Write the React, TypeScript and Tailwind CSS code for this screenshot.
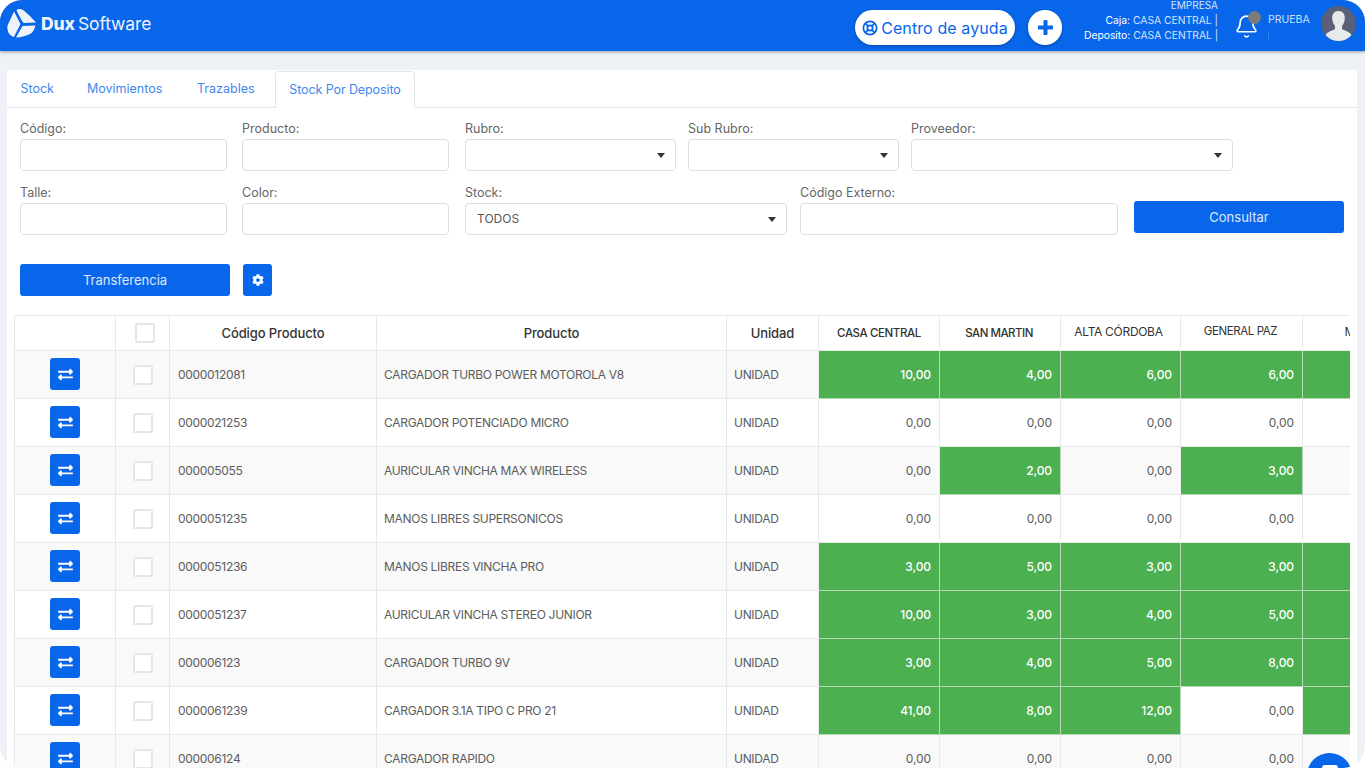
import { LifeBuoy, Bell } from "lucide-react";
import { FaCog, FaExchangeAlt } from "react-icons/fa";

const font = "font-['Inter','Liberation_Sans',sans-serif]";

type Row = { code: string; name: string; v: [string, string, string, string]; last: boolean };

const rows: Row[] = [
  { code: "0000012081", name: "CARGADOR TURBO POWER MOTOROLA V8", v: ["10,00", "4,00", "6,00", "6,00"], last: true },
  { code: "0000021253", name: "CARGADOR POTENCIADO MICRO", v: ["0,00", "0,00", "0,00", "0,00"], last: false },
  { code: "000005055", name: "AURICULAR VINCHA MAX WIRELESS", v: ["0,00", "2,00", "0,00", "3,00"], last: false },
  { code: "0000051235", name: "MANOS LIBRES SUPERSONICOS", v: ["0,00", "0,00", "0,00", "0,00"], last: false },
  { code: "0000051236", name: "MANOS LIBRES VINCHA PRO", v: ["3,00", "5,00", "3,00", "3,00"], last: true },
  { code: "0000051237", name: "AURICULAR VINCHA STEREO JUNIOR", v: ["10,00", "3,00", "4,00", "5,00"], last: true },
  { code: "000006123", name: "CARGADOR TURBO 9V", v: ["3,00", "4,00", "5,00", "8,00"], last: true },
  { code: "0000061239", name: "CARGADOR 3.1A TIPO C PRO 21", v: ["41,00", "8,00", "12,00", "0,00"], last: true },
  { code: "000006124", name: "CARGADOR RAPIDO", v: ["0,00", "0,00", "0,00", "0,00"], last: false },
];

function Logo() {
  return (
    <svg width="30" height="29" viewBox="0 0 30 29" className="shrink-0 mb-[5px]">
      <path d="M9.5 1C11-.3 14-.3 16 1c3 2 9 8 13 12.500L16.500 14C14 10 11 5.500 9.500 1Z" fill="#eef3fb" />
      <path d="M7 2.500 13.500 15C11 20 8.500 24.500 7 28c-3-1-6-3-6.500-8C0 18 .5 16.500 1.200 15Z" fill="#eef3fb" />
      <path d="M9 28.500 15.500 17l13-.5c-1 3.500-2.500 6.500-4.500 8-4 2-10 4-15 4Z" fill="#eef3fb" />
    </svg>
  );
}

function Field({ label, w, select, value }: { label: string; w: string; select?: boolean; value?: string }) {
  return (
    <div className={`flex flex-col shrink-0 ${w}`}>
      <label className="h-[18px] text-[12.5px] leading-[16px] text-[#666]">{label}</label>
      <div className="h-[32px] rounded-[4px] border border-[#dedede] bg-white flex items-center justify-between pl-[11px] pr-[10px] text-[12px] text-[#555]">
        <span>{value}</span>
        {select && <span className="w-0 h-0 border-x-[4px] border-x-transparent border-t-[5px] border-t-[#333]" />}
      </div>
    </div>
  );
}

function Check({ header }: { header?: boolean }) {
  return (
    <span
      className={`block w-[20px] h-[20px] rounded-[2px] border-2 border-[#e6e6e6] bg-white ${header ? "ml-[19px]" : "ml-[17px]"}`}
    />
  );
}

export default function App() {
  return (
    <div className={`h-[768px] w-full bg-white overflow-hidden ${font}`}>
      <div className="relative h-full rounded-[22px] bg-[#eef1f5] overflow-hidden flex flex-col">
        <header className="h-[51px] shrink-0 bg-[#0866eb] shadow-[0_1px_3px_rgba(0,0,0,0.35)] flex items-center pl-[7px] relative z-10">
          <Logo />
          <div className="ml-[4px] text-[17.5px] tracking-[-0.1px] text-[#eef3fb] mb-[3px]">
            <span className="font-extrabold">Dux</span>
            <span className="font-normal ml-[3px]">Software</span>
          </div>
          <div className="ml-auto flex items-center h-full">
            <button className="w-[160px] h-[35px] mt-[4px] rounded-full bg-white flex items-center justify-center gap-[3px] text-[#0866eb] text-[16px] tracking-[0.1px] shadow-[0_1px_3px_rgba(0,0,0,0.3)]">
              <LifeBuoy size={16} strokeWidth={2.6} />
              <span>Centro de ayuda</span>
            </button>
            <button className="ml-[13px] w-[34px] h-[35px] mt-[4px] rounded-full bg-white flex items-center justify-center shadow-[0_1px_3px_rgba(0,0,0,0.3)]">
              <svg width="15" height="15" viewBox="0 0 15 15">
                <path d="M5.500 1a1 1 0 0 1 1-1h2a1 1 0 0 1 1 1v4.500H14a1 1 0 0 1 1 1v2a1 1 0 0 1-1 1H9.500V14a1 1 0 0 1-1 1h-2a1 1 0 0 1-1-1V9.500H1a1 1 0 0 1-1-1v-2a1 1 0 0 1 1-1h4.500Z" fill="#0866eb" />
              </svg>
            </button>
            <div className="ml-[22px] w-[134px] h-full text-right text-[10.3px] leading-[15px] whitespace-nowrap text-[#d5e4fb] flex flex-col -mt-[6px]">
              <span className="mt-[1px] text-[10px]">EMPRESA</span>
              <span>
                <span className="text-white">Caja:</span> CASA CENTRAL |
              </span>
              <span>
                <span className="text-white">Deposito:</span> CASA CENTRAL |
              </span>
            </div>
            <div className="relative ml-[16px] w-[24px] h-[26px] mt-[3px] text-white">
              <Bell size={25} strokeWidth={1.6} />
              <span className="absolute -top-[3px] left-[14px] w-[13px] h-[13px] rounded-full bg-[#7b7b7b]" />
            </div>
            <div className="ml-[10px] w-[53px] flex flex-col self-start pt-[12px]">
              <span className="text-[10.5px] leading-[15px] text-[#cfe0fa]">PRUEBA</span>
              <span className="mt-[5px] w-px h-[7px] bg-[#3b84ef]" />
            </div>
            <div className="mr-[9px] mt-[-4px] w-[35px] h-[35px] rounded-full overflow-hidden bg-[#5b6079] shrink-0">
              <svg viewBox="0 0 35 35" width="35" height="35">
                <path d="M17.500 5c4.500 0 6.600 3.200 6.300 7.600-.2 3-1.200 5.700-2.700 7.200v3.400c2.800 1.600 7.200 2.300 9 5.300L33 35H2l2.900-6.500c1.800-3 6.200-3.700 9-5.300v-3.400c-1.500-1.500-2.500-4.200-2.700-7.200C10.900 8.200 13 5 17.500 5Z" fill="#e6eaea" />
              </svg>
            </div>
          </div>
        </header>

        <main className="flex-1 min-h-0 pt-[19px] pl-[7px] pr-[8px]">
          <div className="bg-white h-full">
            <nav className="h-[38px] border-b border-[#e3e5e8] flex items-end text-[12.5px] text-[#3f88ee]">
              <a className="pl-[13.500px] w-[80px] h-[36px] leading-[36px]">Stock</a>
              <a className="w-[110px] h-[36px] leading-[36px]">Movimientos</a>
              <a className="w-[78px] h-[36px] leading-[36px]">Trazables</a>
              <a className="w-[140px] h-[37px] -mb-px bg-white border border-b-0 border-[#e3e5e8] rounded-t-[4px] leading-[35px] text-center tracking-[-0.1px]">
                Stock Por Deposito
              </a>
            </nav>

            <section className="px-[13px] pt-[13px]">
              <div className="flex gap-x-[12px]">
                <Field label="Código:" w="w-[207px] mr-[3px]" />
                <Field label="Producto:" w="w-[207px] mr-[4px]" />
                <Field label="Rubro:" w="w-[211px]" select />
                <Field label="Sub Rubro:" w="w-[211px]" select />
                <Field label="Proveedor:" w="w-[322px]" select />
              </div>
              <div className="flex items-end gap-x-[12px] mt-[14px]">
                <Field label="Talle:" w="w-[207px] mr-[3px]" />
                <Field label="Color:" w="w-[207px] mr-[4px]" />
                <Field label="Stock:" w="w-[322px] mr-[1px]" select value="TODOS" />
                <Field label="Código Externo:" w="w-[318px] mr-[4px]" />
                <button className="w-[210px] h-[32px] mb-[2px] pt-[1px] rounded-[3px] bg-[#0866eb] text-white/85 text-[13px]">
                  Consultar
                </button>
              </div>
              <div className="flex gap-[13px] mt-[29px]">
                <button className="w-[210px] h-[32px] pt-[1px] rounded-[3px] bg-[#0866eb] text-white/85 text-[13px]">
                  Transferencia
                </button>
                <button className="w-[29px] h-[32px] rounded-[3px] bg-[#0866eb] text-white flex items-center justify-center">
                  <FaCog size={12} />
                </button>
              </div>
            </section>

            <section className="mx-[7px] mt-[19px] overflow-hidden">
              <table className="table-fixed border-collapse w-[1408px] text-[12px] tracking-[-0.3px] text-[#5c5c5c]">
                <colgroup>
                  <col className="w-[101px]" />
                  <col className="w-[54px]" />
                  <col className="w-[207px]" />
                  <col className="w-[350px]" />
                  <col className="w-[92px]" />
                  <col className="w-[121px]" />
                  <col className="w-[121px]" />
                  <col className="w-[120px]" />
                  <col className="w-[122px]" />
                  <col className="w-[120px]" />
                </colgroup>
                <thead>
                  <tr className="h-[35px] text-[#333] text-[13px] tracking-[-0.1px]">
                    <th className="border border-[#e8e8e8] font-medium" />
                    <th className="border border-[#e8e8e8] font-medium p-0">
                      <Check header />
                    </th>
                    <th className="border border-[#e8e8e8] font-medium pt-[1px]">Código Producto</th>
                    <th className="border border-[#e8e8e8] font-medium pt-[1px]">Producto</th>
                    <th className="border border-[#e8e8e8] font-medium pt-[1px]">Unidad</th>
                    <th className="border border-[#e8e8e8] font-medium pt-[1px] text-[11.5px] tracking-[-0.4px]">CASA CENTRAL</th>
                    <th className="border border-[#e8e8e8] font-medium pt-[1px] pr-[2px] text-[11.5px] tracking-[-0.5px]">SAN MARTIN</th>
                    <th className="border border-[#e8e8e8] font-normal text-[12px] tracking-[-0.3px] pb-[3px] pr-[4px]">ALTA CÓRDOBA</th>
                    <th className="border border-[#e8e8e8] font-normal text-[11.5px] tracking-[-0.4px] pb-[3px] pr-[2px]">GENERAL PAZ</th>
                    <th className="border border-[#e8e8e8] font-normal text-[12px] pb-[3px]">MITRE</th>
                  </tr>
                </thead>
                <tbody>
                  {rows.map((r, i) => (
                    <tr key={r.code} className={`h-[48px] ${i % 2 === 0 ? "bg-[#f9f9f9]" : "bg-white"}`}>
                      <td className="border border-[#e8e8e8] p-0">
                        <button className="mx-auto -mt-[1px] w-[30px] h-[32px] rounded-[3px] bg-[#0866eb] text-white flex items-center justify-center">
                          <FaExchangeAlt size={15} />
                        </button>
                      </td>
                      <td className="border border-[#e8e8e8] p-0">
                        <Check />
                      </td>
                      <td className="border border-[#e8e8e8] pl-[8px] pr-[7px] pt-[1px]">{r.code}</td>
                      <td className="border border-[#e8e8e8] px-[7px] pt-[1px] whitespace-nowrap">{r.name}</td>
                      <td className="border border-[#e8e8e8] px-[7px] pt-[1px]">UNIDAD</td>
                      {r.v.map((v, j) => (
                        <td
                          key={j}
                          className={
                            v !== "0,00"
                              ? "border border-[#b5dab7] bg-[#4caf50] text-white font-medium text-right pr-[8px] pt-[1px] tracking-[-0.1px]"
                              : "border border-[#e8e8e8] text-right pr-[8px] pt-[1px] tracking-[-0.1px]"
                          }
                        >
                          {v}
                        </td>
                      ))}
                      <td className={r.last ? "border border-[#b5dab7] bg-[#4caf50]" : "border border-[#e8e8e8]"} />
                    </tr>
                  ))}
                </tbody>
              </table>
            </section>
          </div>
        </main>

        <div className="absolute left-[1307px] top-[753px] w-[45px] h-[45px] rounded-full bg-[#0866eb] flex justify-center pt-[12px]">
          <span className="w-[16px] h-[14px] rounded-[3px] bg-white" />
        </div>
      </div>
    </div>
  );
}
